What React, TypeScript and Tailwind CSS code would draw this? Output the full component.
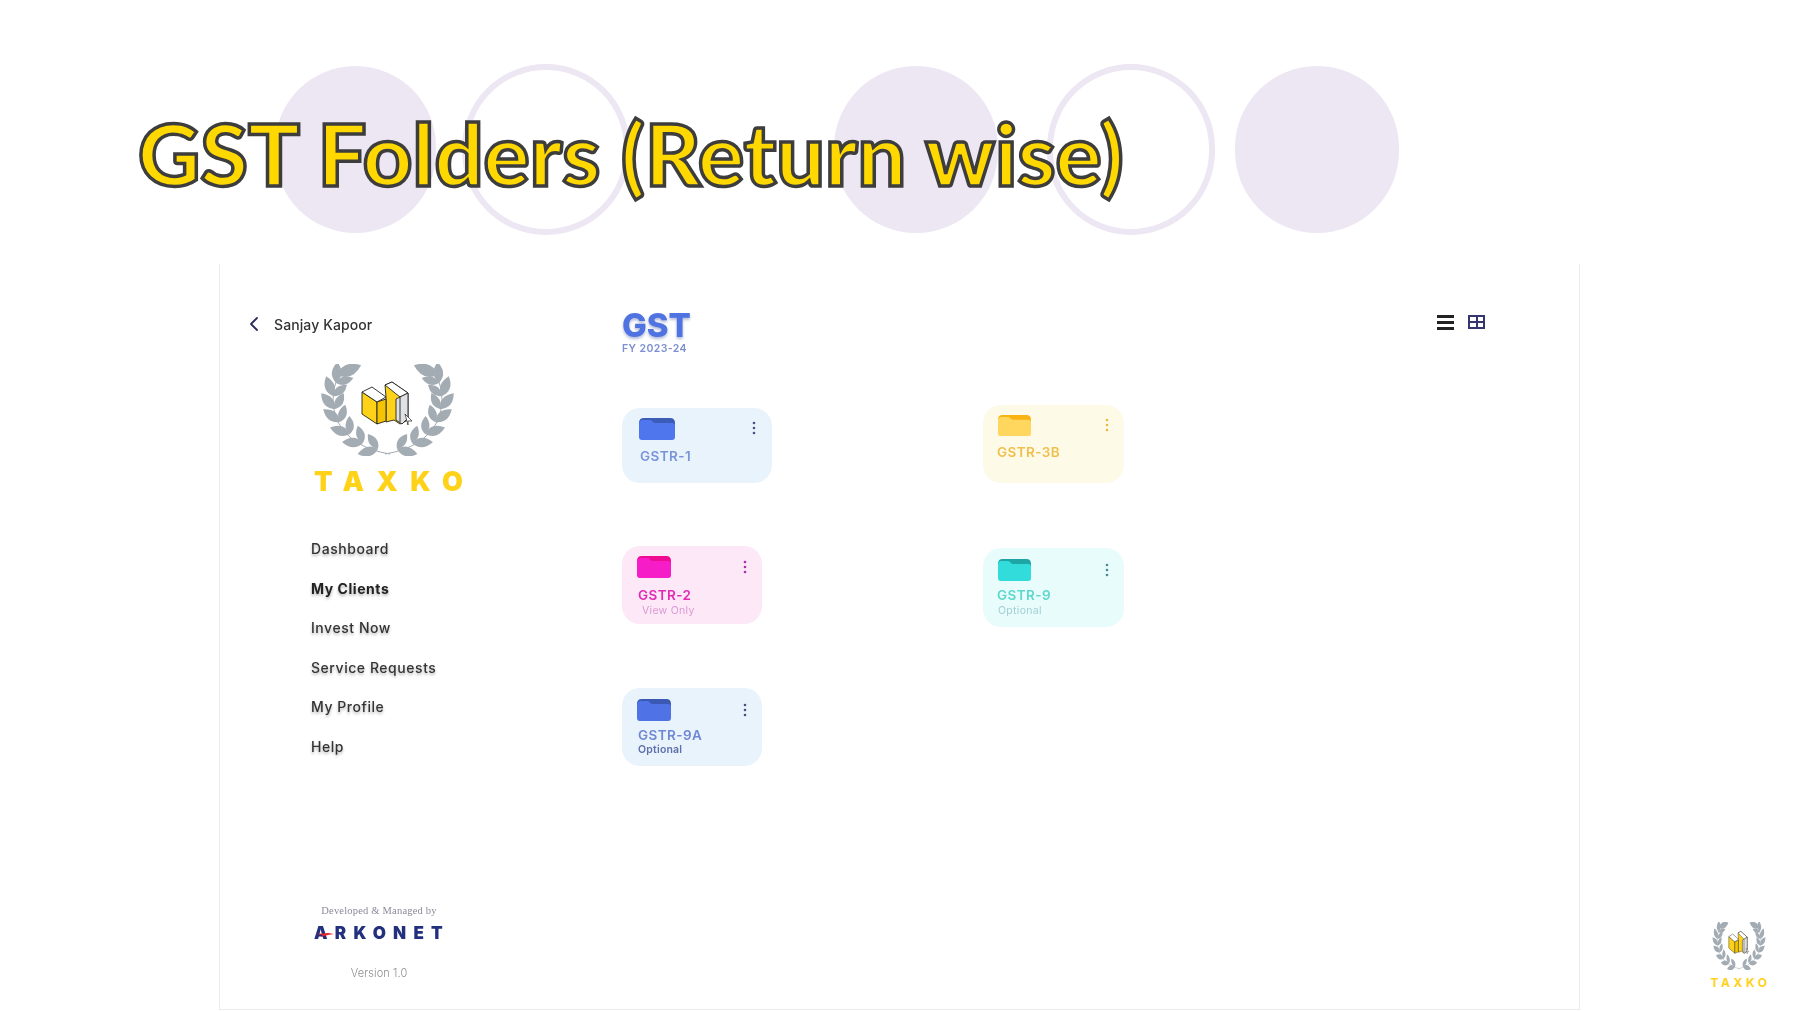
import { ChevronLeft } from "lucide-react";

// laurel nodes from the bottom of the wreath up the left side, t = direction of growth
const laurelNodes = [
  { x: 58, y: 85, t: 198 },
  { x: 43, y: 79, t: 215 },
  { x: 30, y: 70, t: 230 },
  { x: 20, y: 58, t: 249 },
  { x: 15, y: 45, t: 261 },
  { x: 13, y: 32, t: 283 },
  { x: 16, y: 19, t: 306 },
];

function Leaf({ x, y, a, l }: { x: number; y: number; a: number; l: number }) {
  return (
    <path
      d={`M0 0Q${l * 0.45} ${-l * 0.46} ${l} 0Q${l * 0.45} ${l * 0.46} 0 0Z`}
      transform={`translate(${x} ${y}) rotate(${a})`}
      fill="#a3abb3"
    />
  );
}

function Crest({ className }: { className: string }) {
  const branch = (
    <g>
      {laurelNodes.map((n, i) => (
        <g key={i}>
          <Leaf x={n.x} y={n.y} a={n.t - 32} l={21} />
          <Leaf x={n.x} y={n.y} a={n.t + 38} l={18} />
        </g>
      ))}
      <Leaf x={17} y={11} a={-22} l={26} />
      <path d="M70 90Q32 84 18 58Q8 36 18 12" fill="none" stroke="#a3abb3" strokeWidth="1" />
    </g>
  );
  return (
    <svg viewBox="0 0 135 92" preserveAspectRatio="none" className={className}>
      {branch}
      <g transform="translate(135 0) scale(-1 1)">{branch}</g>
      <g stroke="#222" strokeWidth="0.9" strokeLinejoin="round">
        <path d="M65 21L72 18L88 29L88 56L80 60L74 56L66 58L66 33Z" fill="#ffd21a" />
        <path d="M65 21L72 18L88 29L80 33Z" fill="#fff" />
        <path d="M76 35L80 33L88 29L88 54L82 60L76 56Z" fill="#dfe1e4" />
        <path d="M80 33L80 58" fill="none" />
        <path d="M42 28L57 38L57 60L42 50Z" fill="#ffd21a" />
        <path d="M57 38L66 35L66 57L57 60Z" fill="#f4c400" />
        <path d="M42 28L52 23L66 33L57 38Z" fill="#fff" />
        <path d="M85 50L92 57L88 57L88 61Z" fill="#fff" strokeWidth="0.7" />
      </g>
    </svg>
  );
}

function Folder({ back, front, className }: { back: string; front: string; className: string }) {
  return (
    <svg viewBox="0 0 36 22" preserveAspectRatio="none" className={className}>
      <path d="M5 0H31Q36 0 36 5V12H0V5Q0 0 5 0Z" fill={back} />
      <path d="M4 2H11Q13 2 14 4Q15 5 17 5H33Q36 5 36 8V19Q36 22 33 22H3Q0 22 0 19V6Q0 2 4 2Z" fill={front} />
    </svg>
  );
}

function Kebab({ color }: { color: string }) {
  return (
    <svg viewBox="0 0 4 14" className="w-[4px] h-[14px]">
      <circle cx="2" cy="2" r="1.3" fill={color} />
      <circle cx="2" cy="7" r="1.3" fill={color} />
      <circle cx="2" cy="12" r="1.3" fill={color} />
    </svg>
  );
}

const navItems = ["Dashboard", "My Clients", "Invest Now", "Service Requests", "My Profile", "Help"];

export default function App() {
  return (
    <div className="w-[1798px] h-[1011px] overflow-hidden bg-white font-['Inter',sans-serif] flex flex-col">
      {/* slide heading */}
      <div className="relative h-[264px] shrink-0 pt-[64px] pl-[275px] flex items-start">
        <div className="w-[161px] h-[167px] mt-[2px] rounded-full bg-[#ede6f3]" />
        <div className="ml-[26px] w-[168px] h-[171px] rounded-full border-[6px] border-[#ede6f3]" />
        <div className="ml-[204px] w-[164px] h-[167px] mt-[2px] rounded-full bg-[#ede6f3]" />
        <div className="ml-[49px] w-[168px] h-[171px] rounded-full border-[6px] border-[#ede6f3]" />
        <div className="ml-[20px] w-[164px] h-[167px] mt-[2px] rounded-full bg-[#ede6f3]" />
        <h1 className="absolute left-[138px] top-[98px] font-['Lato',sans-serif] font-black text-[86px] leading-[110px] tracking-[0.1px] whitespace-nowrap text-[#ffd800] [-webkit-text-stroke:3.5px_#3d3d3d]">
          GST Folders (Return wise)
        </h1>
      </div>

      <div className="flex flex-1 pl-[219px]">
        {/* screenshot panel */}
        <div className="w-[1361px] h-[746px] flex bg-white border-x border-b border-[#ececec] blur-[0.5px]">
          <aside className="w-[402px] shrink-0 flex flex-col">
            <div className="flex items-center pl-[22px] pt-[49px] h-[71px] text-[14px] font-medium tracking-[0.1px] text-[#333]">
              <ChevronLeft size={24} strokeWidth={1.8} className="text-[#2c2c5c]" />
              <span className="ml-[8px]">Sanjay Kapoor</span>
            </div>
            <div className="pl-[100px] mt-[29px]">
              <Crest className="w-[135px] h-[92px]" />
            </div>
            <div className="pl-[94px] mt-[14px] font-black text-[27px] leading-[24px] tracking-[12.5px] text-[#ffd21a]">
              TAXKO
            </div>
            <nav className="pl-[91px] mt-[45px] flex flex-col gap-[19.5px] text-[14px] leading-[20px] font-medium tracking-[0.55px] text-[#333] [text-shadow:0_2px_3px_rgba(0,0,0,0.3)]">
              {navItems.map((item) => (
                <a key={item} className={item === "My Clients" ? "font-bold text-[#222]" : ""}>
                  {item}
                </a>
              ))}
            </nav>
            <div className="mt-auto pl-[82px] pb-[29px] w-[236px] flex flex-col items-center">
              <div className="font-['Liberation_Serif',serif] text-[10.5px] leading-[12px] tracking-[0.2px] text-[#8a8a9a]">
                Developed &amp; Managed by
              </div>
              <div className="mt-[7px] text-[17px] leading-[18px] font-black tracking-[7.2px] pl-[6px] text-[#23307e] relative">
                ARKONET
                <svg viewBox="0 0 18 6" className="absolute left-[8px] top-[7px] w-[18px] h-[6px]">
                  <path d="M0 3L12 2L18 3L12 4L5 6L7 4Z" fill="#e0262c" />
                </svg>
              </div>
              <div className="mt-[24px] text-[11px] leading-[14px] font-light tracking-[0.1px] text-[#8f8f8f]">Version 1.0</div>
            </div>
          </aside>

          <main className="flex-1 pt-[44px]">
            <div className="flex justify-between pr-[94px]">
              <div>
                <div className="text-[33px] leading-[34px] font-extrabold text-[#4f73e0] [text-shadow:0_2px_3px_rgba(60,80,160,0.4)]">
                  GST
                </div>
                <div className="text-[10.5px] leading-[14px] font-semibold tracking-[0.4px] text-[#7c90d0]">
                  FY 2023-24
                </div>
              </div>
              <div className="flex items-start gap-[14px] pt-[7px]">
                <div className="w-[17px] flex flex-col gap-[3px]">
                  <div className="h-[3px] bg-[#222]" />
                  <div className="h-[3px] bg-[#222]" />
                  <div className="h-[3px] bg-[#222]" />
                </div>
                <div className="w-[17px] h-[14px] grid grid-cols-2 gap-[2px] p-[2px] bg-[#35356f]">
                  <div className="bg-white" />
                  <div className="bg-white" />
                  <div className="bg-white" />
                  <div className="bg-white" />
                </div>
              </div>
            </div>

            <div className="mt-[49px] grid grid-cols-[361px_1fr] items-start">
              <div className="mt-[3px] w-[150px] h-[75px] rounded-[18px] bg-[#e9f3fc] pl-[17px] pr-[16px] pt-[10px]">
                <div className="flex justify-between items-start">
                  <Folder back="#3d5cb8" front="#4f76ec" className="w-[36px] h-[22px]" />
                  <div className="pt-[3px]"><Kebab color="#46527e" /></div>
                </div>
                <div className="mt-[8px] pl-[1px] text-[13.5px] leading-[16px] font-semibold tracking-[0.4px] text-[#7a94d8]">GSTR-1</div>
              </div>
              <div className="w-[141px] h-[78px] rounded-[18px] bg-[#fdfae8] pl-[15px] pr-[15px] pt-[10px]">
                <div className="flex justify-between items-start">
                  <Folder back="#f9b313" front="#ffd75e" className="w-[33px] h-[21px]" />
                  <div className="pt-[3px]"><Kebab color="#e8bb44" /></div>
                </div>
                <div className="mt-[8px] -ml-[1px] text-[13.5px] leading-[16px] font-semibold tracking-[0.4px] text-[#eec04e]">GSTR-3B</div>
              </div>

              <div className="mt-[63px] w-[140px] h-[78px] rounded-[18px] bg-[#fce8f7] pl-[15px] pr-[15px] pt-[10px]">
                <div className="flex justify-between items-start">
                  <Folder back="#ee0b92" front="#f61cc8" className="w-[34px] h-[22px]" />
                  <div className="pt-[4px]"><Kebab color="#a830a8" /></div>
                </div>
                <div className="mt-[9px] pl-[1px] text-[13.5px] leading-[16px] font-semibold tracking-[0.4px] text-[#e02cb4]">GSTR-2</div>
                <div className="mt-[1px] pl-[5px] text-[10.5px] leading-[14px] tracking-[0.3px] text-[#dc9ad2]">View Only</div>
              </div>
              <div className="mt-[65px] w-[141px] h-[79px] rounded-[18px] bg-[#e9fcfc] pl-[15px] pr-[15px] pt-[11px]">
                <div className="flex justify-between items-start">
                  <Folder back="#1ea6a6" front="#31dcda" className="w-[33px] h-[22px]" />
                  <div className="pt-[4px]"><Kebab color="#4a8a94" /></div>
                </div>
                <div className="mt-[6px] -ml-[1px] text-[13.5px] leading-[16px] font-semibold tracking-[0.4px] text-[#5cd8cc]">GSTR-9</div>
                <div className="mt-[1px] text-[10.5px] leading-[14px] tracking-[0.3px] text-[#a0cfd4]">Optional</div>
              </div>

              <div className="mt-[61px] w-[140px] h-[78px] rounded-[18px] bg-[#e9f3fb] pl-[15px] pr-[15px] pt-[11px]">
                <div className="flex justify-between items-start">
                  <Folder back="#3a58b4" front="#4f73e6" className="w-[34px] h-[22px]" />
                  <div className="pt-[4px]"><Kebab color="#46527e" /></div>
                </div>
                <div className="mt-[6px] pl-[1px] text-[13.5px] leading-[16px] font-semibold tracking-[0.4px] text-[#7088d4]">GSTR-9A</div>
                <div className="pl-[1px] text-[10.5px] leading-[14px] font-semibold tracking-[0.2px] text-[#5e70aa]">Optional</div>
              </div>
            </div>
          </main>
        </div>

        {/* corner logo */}
        <div className="flex-1 flex flex-col items-end justify-end pr-[28px] pb-[21px]">
          <div className="flex flex-col items-center w-[62px]">
            <Crest className="w-[54px] h-[48px]" />
            <div className="mt-[6px] font-bold text-[12px] leading-[14px] tracking-[3.6px] pl-[3px] whitespace-nowrap text-[#ffd21a]">
              TAXKO
            </div>
          </div>
        </div>
      </div>
    </div>
  );
}
